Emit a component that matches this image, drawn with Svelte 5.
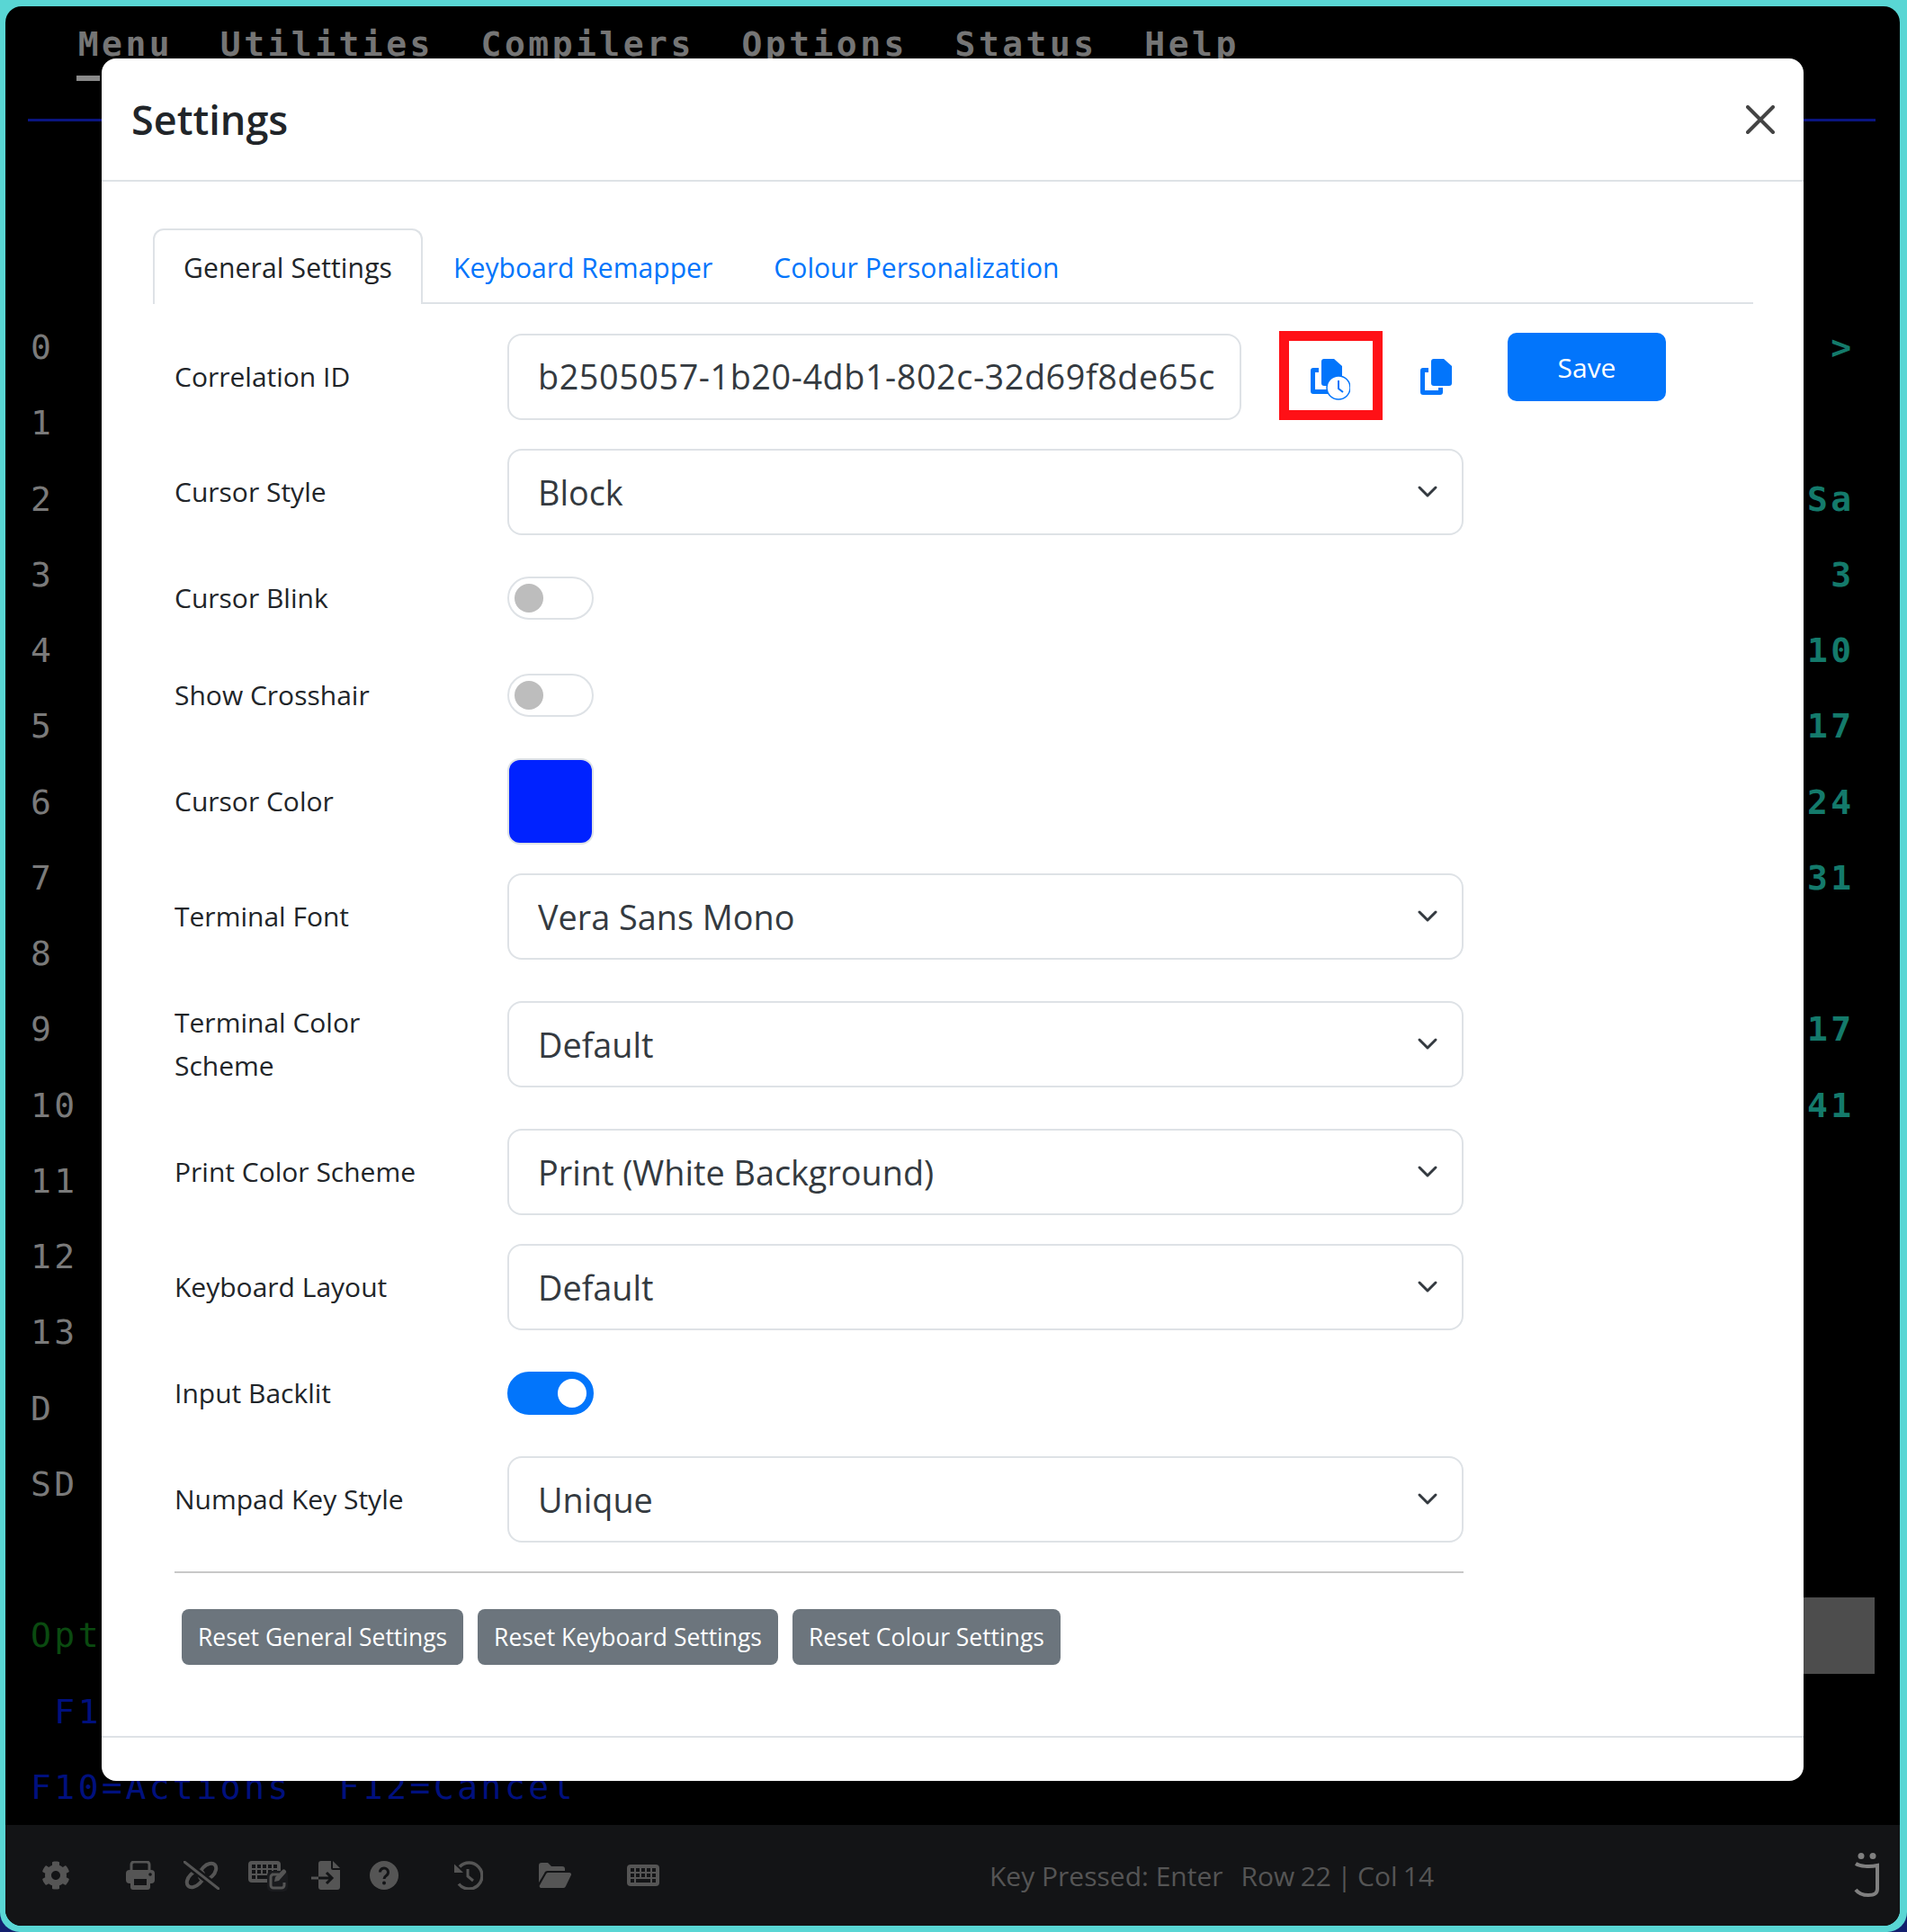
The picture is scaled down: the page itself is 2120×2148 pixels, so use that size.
<script>
  const sideRows = [
    ['0', ' >'], ['1', ''], ['2', 'Sa'], ['3', ' 3'], ['4', '10'], ['5', '17'], ['6', '24'], ['7', '31'],
    ['8', ''], ['9', '17'], ['10', '41'], ['11', ''], ['12', ''], ['13', ''], ['D', ''], ['SD', '']
  ];

  const fields = [
    { label: 'Cursor Style', type: 'select', value: 'Block' },
    { label: 'Cursor Blink', type: 'switch', on: false },
    { label: 'Show Crosshair', type: 'switch', on: false },
    { label: 'Cursor Color', type: 'color' },
    { label: 'Terminal Font', type: 'select', value: 'Vera Sans Mono' },
    { label: 'Terminal Color Scheme', type: 'select', value: 'Default' },
    { label: 'Print Color Scheme', type: 'select', value: 'Print (White Background)' },
    { label: 'Keyboard Layout', type: 'select', value: 'Default' },
    { label: 'Input Backlit', type: 'switch', on: true },
    { label: 'Numpad Key Style', type: 'select', value: 'Unique' }
  ];

  const tabs = ['General Settings', 'Keyboard Remapper', 'Colour Personalization'];
  const resets = ['Reset General Settings', 'Reset Keyboard Settings', 'Reset Colour Settings'];
  const keyRows = [
    [[4, 4], [10, 4], [16, 4], [22, 4], [28, 4]],
    [[4, 4], [10, 4], [16, 4], [22, 4], [28, 4]],
    [[4, 4], [10, 16], [28, 4]]
  ];
  const menuLine = '  Menu  Utilities  Compilers  Options  Status  Help';
</script>

{#snippet keyboard()}
  <rect width="36" height="24" rx="4" fill="#555" />
  {#each keyRows as row, r}
    {#each row as key}
      <rect x={key[0]} y={4 + r * 6} width={key[1]} height="4" fill="#131416" />
    {/each}
  {/each}
{/snippet}

{#snippet frontSheet()}
  <path d="M12 3a3 3 0 0 1 3-3h11l9 8v19a3 3 0 0 1-3 3H15a3 3 0 0 1-3-3z" />
{/snippet}

<div class="frame">
  <div class="window">
    <div class="screen">
      <div class="row menu">
        <span class="cell">{menuLine}</span>
        <span class="cursor"></span>
      </div>
      <div class="row"><div class="rule"></div></div>
      <div class="row"></div>
      <div class="row"></div>
      {#each sideRows as row}
        <div class="row">
          <span class="cell">{row[0]}</span>
          <span class="side">{row[1]}</span>
        </div>
      {/each}
      <div class="row"></div>
      <div class="row">
        <span class="cell green">Options</span>
        <span class="side block"></span>
      </div>
      <div class="row"><span class="cell blue">{' F1'}</span></div>
      <div class="row"><span class="cell blue">F10=Actions  F12=Cancel</span></div>
    </div>

    <div class="statusbar">
      <svg class="ico" width="32" height="32" viewBox="0 0 512 512" fill="#555"><path d="M487.4 315.7l-42.6-24.6c4.3-23.2 4.3-47 0-70.2l42.6-24.6c4.9-2.8 7.1-8.6 5.5-14-11.1-35.6-30-67.8-54.7-94.6-3.8-4.1-10-5.1-14.8-2.3L380.8 110c-17.9-15.4-38.5-27.3-60.8-35.1V25.8c0-5.6-3.9-10.5-9.4-11.7-36.7-8.2-74.3-7.8-109.2 0-5.5 1.2-9.4 6.1-9.4 11.7V75c-22.2 7.9-42.8 19.8-60.8 35.1L88.7 85.5c-4.9-2.8-11-1.9-14.8 2.3-24.7 26.7-43.6 58.9-54.7 94.6-1.7 5.4.6 11.2 5.5 14L67.3 221c-4.3 23.2-4.3 47 0 70.2l-42.6 24.6c-4.9 2.8-7.1 8.6-5.5 14 11.1 35.6 30 67.8 54.7 94.6 3.8 4.1 10 5.1 14.8 2.3l42.6-24.6c17.9 15.4 38.5 27.3 60.8 35.1v49.2c0 5.6 3.9 10.5 9.4 11.7 36.7 8.2 74.3 7.8 109.2 0 5.5-1.2 9.4-6.1 9.4-11.7v-49.2c22.2-7.9 42.8-19.8 60.8-35.1l42.6 24.6c4.9 2.8 11 1.9 14.8-2.3 24.7-26.7 43.6-58.9 54.7-94.6 1.5-5.5-.7-11.3-5.6-14.1zM256 336c-44.1 0-80-35.9-80-80s35.9-80 80-80 80 35.9 80 80-35.9 80-80 80z" /></svg>

      <svg class="ico wide" width="32" height="32" viewBox="0 0 32 32">
        <path d="M6 11V4a3 3 0 0 1 3-3h14a3 3 0 0 1 3 3v7" fill="none" stroke="#555" stroke-width="3" />
        <rect y="10" width="32" height="15" rx="4" fill="#555" />
        <rect x="5" y="17" width="22" height="15" rx="3" fill="#555" />
        <rect x="9" y="20" width="14" height="7" fill="#131416" />
        <circle cx="27" cy="15" r="1.8" fill="#131416" />
      </svg>

      <svg class="ico narrow" width="40" height="32" viewBox="0 0 40 32">
        <ellipse cx="13" cy="20" rx="11" ry="7" transform="rotate(-45 13 20)" fill="none" stroke="#555" stroke-width="4" />
        <ellipse cx="27" cy="12" rx="11" ry="7" transform="rotate(-45 27 12)" fill="none" stroke="#555" stroke-width="4" />
        <path d="M1 1l38 30" stroke="#131416" stroke-width="8" />
        <path d="M1 1l38 30" stroke="#555" stroke-width="3" stroke-linecap="round" />
      </svg>

      <svg class="ico narrow" width="44" height="36" viewBox="0 -2 44 36">
        {@render keyboard()}
        <rect x="21" y="11" width="23" height="23" rx="5" fill="#1a1b1e" />
        <path d="M26 15h8M40 24v3a3 3 0 0 1-3 3H28a3 3 0 0 1-3-3v-9a3 3 0 0 1 3-3" fill="none" stroke="#555" stroke-width="3" />
        <path d="M29 23l1-5L38 10a2 2 0 0 1 3 0l.5.5a2 2 0 0 1 0 3L34 22z" fill="#555" />
      </svg>

      <svg class="ico tight" width="33" height="32" viewBox="0 0 33 32">
        <path d="M11 0H22V8a2 2 0 0 0 2 2H32V29a3 3 0 0 1-3 3H11a3 3 0 0 1-3-3V3a3 3 0 0 1 3-3z" fill="#555" />
        <path d="M24 0l8 8h-8z" fill="#555" />
        <path d="M0 19h8" stroke="#555" stroke-width="3" />
        <path d="M8 19h15M17 13l6 6-6 6" fill="none" stroke="#131416" stroke-width="3" />
      </svg>

      <svg class="ico narrow" width="32" height="32" viewBox="0 0 32 32">
        <circle cx="16" cy="16" r="16" fill="#555" />
        <path d="M11.5 12.5a4.5 4.5 0 1 1 7 3.7c-1.8 1.2-2.5 2-2.5 3.8" fill="none" stroke="#131416" stroke-width="3" />
        <circle cx="16" cy="24.5" r="2" fill="#131416" />
      </svg>

      <svg class="ico wide" width="32" height="32" viewBox="0 0 32 32">
        <path d="M6 6.5A14.5 14.5 0 1 1 5 25.5" fill="none" stroke="#555" stroke-width="3.5" />
        <path d="M0 3.5V13H10z" fill="#555" />
        <path d="M15 9v8l6 5" fill="none" stroke="#555" stroke-width="3" />
      </svg>

      <svg class="ico wide" width="36" height="28" viewBox="0 0 36 28" fill="#555">
        <path d="M0 3a3 3 0 0 1 3-3h7l4 4h12a3 3 0 0 1 3 3v2H10a4 4 0 0 0-4 3L0 22z" />
        <path d="M10 11h24a2 2 0 0 1 2 2.5L30 26a3 3 0 0 1-3 2H3a2 2 0 0 1-2-3l7-12.5a3 3 0 0 1 2-1.5z" />
      </svg>

      <svg class="ico wide" width="36" height="24" viewBox="0 0 36 24">
        {@render keyboard()}
      </svg>

      <div class="status-text">
        <span>Key Pressed: Enter</span>
        <span class="position">Row 22 | Col 14</span>
      </div>

      <svg class="logo" width="28" height="50" viewBox="0 0 28 50">
        <circle cx="8" cy="3.5" r="3.5" fill="#808080" />
        <circle cx="21" cy="3.5" r="3.5" fill="#808080" />
        <path d="M2 12c5 3 15 4 24 2v26c0 5-3 7-10 7C10 47 5 45 2 41" fill="none" stroke="#808080" stroke-width="4" />
      </svg>
    </div>

    <div class="modal">
      <header class="modal-header">
        <h4>Settings</h4>
        <button class="close" aria-label="Close">
          <svg width="32" height="32" viewBox="0 0 32 32"><path d="M2 2l28 28M30 2L2 30" stroke="#444" stroke-width="4" stroke-linecap="round" /></svg>
        </button>
      </header>

      <div class="modal-body">
        <nav class="tabs">
          {#each tabs as tab, i}
            <button class="tab" class:active={i === 0}>{tab}</button>
          {/each}
        </nav>

        <form class="form">
          <div class="field">
            <label class="label" for="corr">Correlation ID</label>
            <input id="corr" class="control corr-input" value="b2505057-1b20-4db1-802c-32d69f8de65c" />
            <button type="button" class="icon-btn highlighted" aria-label="Copy history">
              <svg width="44" height="46" viewBox="0 0 44 46" fill="#0275fb">
                {@render frontSheet()}
                <path d="M9 10H3a3 3 0 0 0-3 3v23a3 3 0 0 0 3 3h21v-5H5V15h4z" />
                <circle cx="31" cy="32" r="13" fill="#fff" stroke="#0275fb" stroke-width="1.5" />
                <path d="M31 24v9l5 4" fill="none" stroke="#0275fb" stroke-width="2" />
              </svg>
            </button>
            <button type="button" class="icon-btn" aria-label="Copy">
              <svg width="35" height="40" viewBox="0 0 35 40" fill="#0275fb">
                {@render frontSheet()}
                <path d="M9 10H3a3 3 0 0 0-3 3v24a3 3 0 0 0 3 3h19a3 3 0 0 0 3-3v-5h-5v3H5V15h4z" />
              </svg>
            </button>
            <button type="button" class="save">Save</button>
          </div>

          {#each fields as field}
            <div class="field">
              <span class="label">{field.label}</span>
              {#if field.type === 'select'}
                <div class="select-wrap">
                  <select class="control select" aria-label={field.label}>
                    <option>{field.value}</option>
                  </select>
                  <svg class="chevron" width="32" height="32" viewBox="0 0 32 32"><path d="M6 12l9 9 9-9" fill="none" stroke="#343a40" stroke-width="3" stroke-linecap="round" stroke-linejoin="round" /></svg>
                </div>
              {:else if field.type === 'switch'}
                <div class="switch-row">
                  <span class="switch" class:on={field.on}><span class="knob"></span></span>
                </div>
              {:else}
                <span class="swatch"><span class="swatch-fill"></span></span>
              {/if}
            </div>
          {/each}

          <hr />

          <div class="resets">
            {#each resets as reset}
              <button type="button" class="reset">{reset}</button>
            {/each}
          </div>
        </form>
      </div>

      <footer class="modal-footer"></footer>
    </div>
  </div>
</div>

<style>
  :global(body) {
    margin: 0;
    background: #12206e;
  }

  .frame {
    width: 2120px;
    height: 2148px;
    box-sizing: border-box;
    padding: 7px 8px 7px 6px;
    background: #59d6d4;
    border-radius: 0 0 22px 22px;
    font-family: "Open Sans", sans-serif;
  }

  .window {
    position: relative;
    height: 100%;
    display: flex;
    flex-direction: column;
    background: #000;
    border-radius: 18px;
    overflow: hidden;
  }

  .screen {
    flex: 1;
    display: flex;
    flex-direction: column;
    font-family: "DejaVu Sans Mono", monospace;
    font-size: 38px;
    letter-spacing: 3.47px;
    color: #7a7a7a;
  }

  .row {
    position: relative;
    flex: 1;
    display: flex;
    align-items: center;
    justify-content: space-between;
    padding: 0 28px;
  }

  .cell {
    white-space: pre;
  }

  .menu .cell {
    font-weight: 700;
    color: #757575;
  }

  .cursor {
    position: absolute;
    left: 79px;
    bottom: 1px;
    width: 26px;
    height: 6px;
    background: #8a8a8a;
  }

  .rule {
    flex: 1;
    height: 3px;
    margin: 1px -1px 0 -3px;
    background: #0a1580;
  }

  .side {
    box-sizing: border-box;
    width: 79px;
    padding: 0 0 0 4px;
    white-space: pre;
    color: #147a6b;
    font-weight: 700;
  }

  .block {
    align-self: stretch;
    background: #4d4d4d;
  }

  .green {
    color: #0a4a10;
  }

  .blue {
    color: #00107e;
  }

  .statusbar {
    flex: none;
    height: 112px;
    display: flex;
    align-items: center;
    padding: 0 23px 0 40px;
    background: #131416;
  }

  .ico {
    flex: none;
    display: block;
  }

  .wide {
    margin-left: 62px;
  }

  .narrow {
    margin-left: 32px;
  }

  .tight {
    margin-left: 26px;
  }

  .status-text {
    display: flex;
    gap: 20px;
    margin-left: 367px;
    font-size: 30px;
    color: #555;
  }

  .position {
    word-spacing: -1.5px;
  }

  .logo {
    margin-left: auto;
  }

  .modal {
    position: absolute;
    left: 107px;
    top: 58px;
    width: 1892px;
    height: 1915px;
    display: flex;
    flex-direction: column;
    background: #fff;
    border-radius: 16px;
    color: #212529;
  }

  .modal-header {
    flex: none;
    height: 135px;
    display: flex;
    align-items: center;
    justify-content: space-between;
    padding: 0 32px 0 33px;
    border-bottom: 2px solid #dee2e6;
  }

  h4 {
    margin: 0;
    font-size: 45px;
    font-weight: 600;
    line-height: 1.5;
  }

  .close {
    display: flex;
    padding: 0;
    border: 0;
    background: none;
  }

  .modal-body {
    flex: 1;
    padding: 52px 56px 0 57px;
  }

  .tabs {
    display: flex;
    height: 82px;
    border-bottom: 2px solid #dee2e6;
  }

  .tab {
    height: 84px;
    padding: 0 32px;
    border: 2px solid transparent;
    border-bottom: 0;
    border-radius: 12px 12px 0 0;
    background: none;
    font: inherit;
    font-size: 30.1px;
    color: #0275fb;
  }

  .tab.active {
    border-color: #dee2e6;
    background: #fff;
    color: #212529;
    letter-spacing: 0.12px;
  }

  .form {
    width: 1433px;
    padding: 32px 0 0 24px;
    display: flex;
    flex-direction: column;
    gap: 32px;
  }

  .field {
    display: flex;
    align-items: center;
  }

  .label {
    flex: none;
    box-sizing: border-box;
    width: 370px;
    padding: 14px 50px 14px 0;
    font-size: 30px;
    line-height: 48px;
  }

  .control {
    box-sizing: border-box;
    height: 96px;
    padding: 0 32px;
    border: 2px solid #dee2e6;
    border-radius: 16px;
    background: #fff;
    font: inherit;
    font-size: 37.8px;
    color: #343a40;
    outline: none;
  }

  .corr-input {
    flex: none;
    width: 816px;
    padding-right: 16px;
    letter-spacing: 0.55px;
  }

  .icon-btn {
    flex: none;
    align-self: flex-start;
    display: flex;
    margin: 29px 0 0 42px;
    padding: 0;
    border: 0;
    background: none;
  }

  .highlighted {
    margin-top: -2px;
    box-sizing: border-box;
    width: 115px;
    height: 99px;
    padding: 20px 0 0 24px;
    border: 11px solid #ff1016;
  }

  .save {
    flex: none;
    align-self: flex-start;
    width: 176px;
    height: 76px;
    margin-left: 62px;
    border: 0;
    border-radius: 10px;
    background: #0275fb;
    color: #fff;
    font: inherit;
    font-size: 30px;
  }

  .select-wrap {
    position: relative;
    flex: 1;
    display: flex;
  }

  .select {
    flex: 1;
    appearance: none;
  }

  .chevron {
    position: absolute;
    right: 23px;
    top: 31px;
    pointer-events: none;
  }

  .switch-row {
    display: flex;
  }

  .switch {
    box-sizing: border-box;
    width: 96px;
    height: 48px;
    display: flex;
    align-items: center;
    padding: 0 6px;
    border: 2px solid #dee2e6;
    border-radius: 24px;
    background: #fff;
  }

  .knob {
    width: 32px;
    height: 32px;
    border-radius: 50%;
    background: #bdbdbd;
  }

  .switch.on {
    justify-content: flex-end;
    border-color: #0275fb;
    background: #0275fb;
  }

  .switch.on .knob {
    background: #fff;
  }

  .swatch {
    box-sizing: border-box;
    width: 96px;
    height: 96px;
    border: 2px solid #dee2e6;
    border-radius: 14px;
    display: flex;
  }

  .swatch-fill {
    flex: 1;
    border-radius: 12px;
    background: #0022ff;
  }

  hr {
    margin: 0;
    width: 100%;
    border: 0;
    border-top: 2px solid #c8c8c8;
  }

  .resets {
    display: flex;
    gap: 16px;
    margin: 8px 0 0 8px;
  }

  .reset {
    height: 62px;
    padding: 0 18px;
    border: 0;
    border-radius: 8px;
    background: #6c757d;
    color: #fff;
    font: inherit;
    font-size: 26.45px;
  }

  .modal-footer {
    flex: none;
    height: 48px;
    border-top: 2px solid #dee2e6;
  }
</style>
